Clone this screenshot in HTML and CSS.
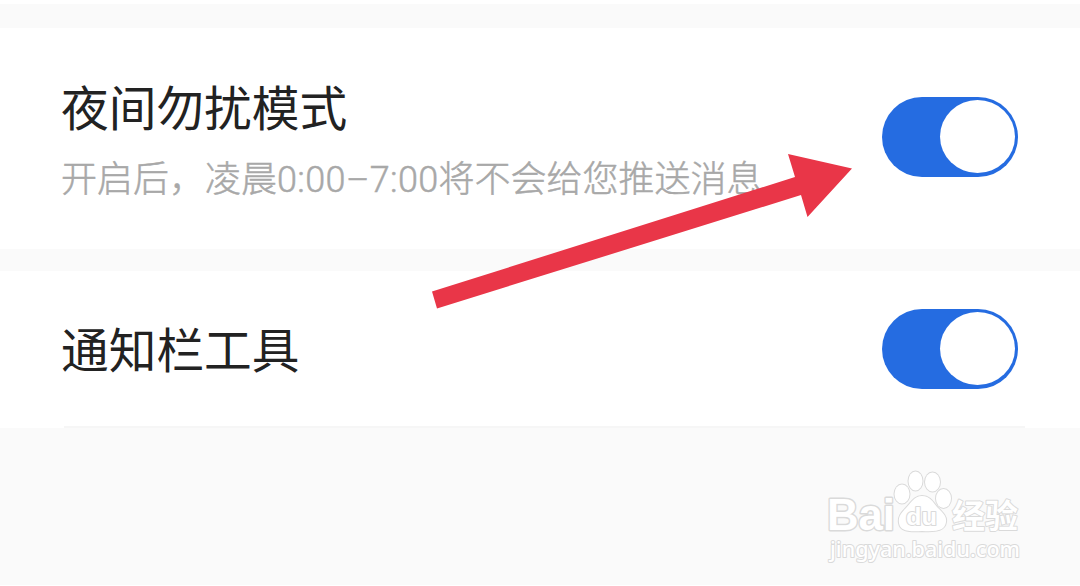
FILE: index.html
```html
<!DOCTYPE html>
<html lang="zh-CN">
<head>
    <meta charset="UTF-8">
    <meta name="viewport" content="width=device-width, initial-scale=1.0">
    <title>通知设置</title>
    <link rel="stylesheet" href="styles.css">
</head>
<body>
    <main class="settings">
        <section class="setting-row night-mode">
            <div class="setting-text">
                <h2>夜间勿扰模式</h2>
                <p>开启后，凌晨<span class="time">0:00–7:00</span>将不会给您推送消息</p>
            </div>
            <div class="switch" role="switch" aria-checked="true"><span class="knob"></span></div>
        </section>

        <section class="setting-row toolbar">
            <div class="setting-text">
                <h2>通知栏工具</h2>
            </div>
            <div class="switch" role="switch" aria-checked="true"><span class="knob"></span></div>
        </section>
    </main>

    <svg class="arrow" width="420" height="156" viewBox="432 153 420 156">
        <path d="M432 291.5 L795 177 L788 154 L852 168.5 L807.5 217 L801 195 L437 308.5 Z" fill="#e93648"/>
    </svg>

    <svg class="watermark" width="204" height="100" viewBox="822 465 204 100">
        <g class="outlined">
            <text class="brand" x="827" y="530" font-size="45" textLength="68" lengthAdjust="spacingAndGlyphs">Bai</text>
            <ellipse cx="902" cy="494" rx="7.5" ry="9.5"/>
            <ellipse cx="915.5" cy="481" rx="7" ry="9.5"/>
            <ellipse cx="932.5" cy="482" rx="7.5" ry="9.5"/>
            <ellipse cx="943.5" cy="498.5" rx="7.5" ry="9.5"/>
            <path d="M922 496 C914 496 911 503 906 508 C901 513 898 517 899 523 C900 530 906 532 922 531 C938 532 945 530 946 522 C947 516 942 512 937 507 C933 502 930 496 922 496 Z"/>
            <text class="brand-inner" x="906" y="525" font-size="23" textLength="31" lengthAdjust="spacingAndGlyphs">du</text>
            <text class="brand-cn" x="952" y="527.5" font-size="33">经验</text>
            <text class="site" x="830" y="557" font-size="21" textLength="190" lengthAdjust="spacingAndGlyphs">jingyan.baidu.com</text>
        </g>
    </svg>
</body>
</html>
```
FILE: styles.css
```css
* {
    margin: 0;
    padding: 0;
    box-sizing: border-box;
}

body {
    position: relative;
    height: 586px;
    overflow: hidden;
    background: #fafafa;
    border-bottom: 1px solid #fff;
    font-family: Roboto, "Noto Sans CJK SC", sans-serif;
}

.settings {
    display: flex;
    flex-direction: column;
    gap: 22px;
    padding-top: 24px;
    border-top: 4px solid #fff;
}

.setting-row {
    display: flex;
    justify-content: space-between;
    background: #fff;
    padding: 0 62px 0 61px;
}

.night-mode {
    height: 221px;
    padding-top: 43px;
}

.toolbar {
    position: relative;
    height: 157px;
    padding-top: 42px;
}

/* inset divider under the last row */
.toolbar::after {
    content: '';
    position: absolute;
    left: 64px;
    right: 55px;
    bottom: 0;
    height: 2px;
    background: #f6f6f6;
}

.setting-text h2 {
    color: #222;
    font-family: "Noto Sans CJK SC", sans-serif;
    font-size: 47.7px;
    font-weight: 400;
    line-height: 70px;
}

.setting-text p {
    color: #a8a8a8;
    font-family: "Noto Sans CJK SC", sans-serif;
    font-size: 36px;
    font-weight: 300;
    line-height: 54px;
    margin-top: 8px;
    white-space: nowrap;
    -webkit-text-stroke: 0.5px #a8a8a8;
}

.time {
    font-family: Roboto, sans-serif;
    letter-spacing: 0.35px;
}

.switch {
    flex: none;
    width: 136px;
    height: 80px;
    margin-top: 26px;
    padding: 3px 3px 0 58px;
    border-radius: 40px;
    background: #256ce1;
}

.toolbar .switch {
    margin-top: -4px;
}

.knob {
    display: block;
    width: 75px;
    height: 73px;
    border-radius: 50%;
    background: #fff;
}

.arrow {
    position: absolute;
    left: 432px;
    top: 153px;
}

.watermark {
    position: absolute;
    left: 822px;
    top: 465px;
}

.outlined {
    fill: #fff;
    stroke: #dadada;
    stroke-width: 2px;
    stroke-linejoin: round;
    paint-order: stroke;
}

.brand,
.brand-inner {
    font-family: "Liberation Sans", sans-serif;
    font-weight: 700;
}

.brand {
    stroke-width: 3px;
}

.brand-cn {
    font-family: "Noto Sans CJK SC", sans-serif;
    font-weight: 700;
}

.site {
    font-family: "Noto Sans", sans-serif;
    font-weight: 500;
}
```
